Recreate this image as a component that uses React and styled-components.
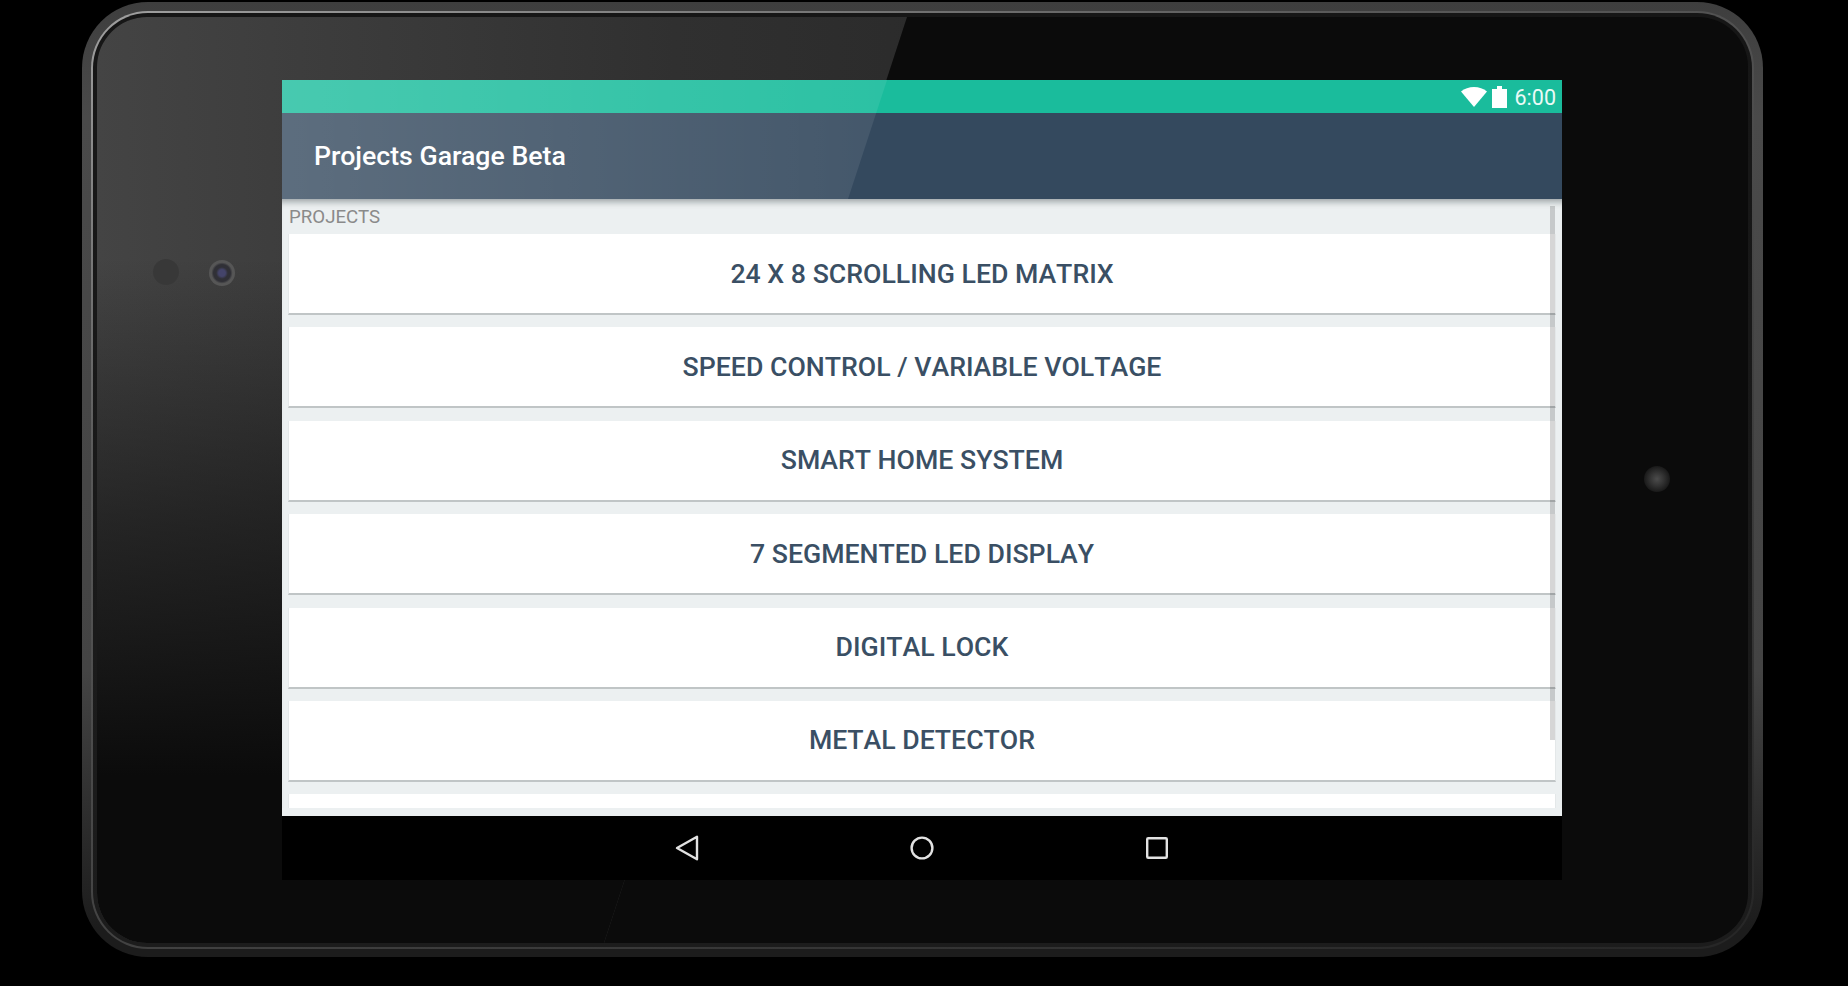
import React from "react";
import styled, { createGlobalStyle } from "styled-components";

const PROJECTS = [
  "24 X 8 SCROLLING LED MATRIX",
  "SPEED CONTROL / VARIABLE VOLTAGE",
  "SMART HOME SYSTEM",
  "7 SEGMENTED LED DISPLAY",
  "DIGITAL LOCK",
  "METAL DETECTOR",
  "",
];

const App = () => {
  return (
    <Page>
      <GlobalStyle />
      <Shell>
        <Rim>
          <Groove>
            <Bezel>
              <Glare />
              <FrontCamera />
              <CameraLens />
              <Sensor />
              <Screen>
                <TopBars>
                  <StatusBar>
                    <svg width="26" height="20" viewBox="0 0 26 20">
                      <path d="M0 4.5C3.5 1.6 8 0 13 0s9.5 1.6 13 4.5L13 20z" fill="#fff" />
                    </svg>
                    <svg width="15" height="22" viewBox="0 0 15 22">
                      <path d="M0 3h5V0h5v3h5v19H0z" fill="#fff" />
                    </svg>
                    <Clock>6:00</Clock>
                  </StatusBar>
                  <AppBar>Projects Garage Beta</AppBar>
                </TopBars>
                <Content>
                  <SectionLabel>PROJECTS</SectionLabel>
                  <ScrollThumb />
                  <CardList>
                    {PROJECTS.map((name, i) => (
                      <Card key={i}>{name}</Card>
                    ))}
                  </CardList>
                </Content>
                <NavBar>
                  <NavButton>
                    <svg width="24" height="26" viewBox="0 0 24 26">
                      <path d="M22 1.8v22.4L2 13z" fill="none" stroke="#e2e2e2" strokeWidth="2.4" strokeLinejoin="round" />
                    </svg>
                  </NavButton>
                  <NavButton>
                    <svg width="24" height="24" viewBox="0 0 24 24">
                      <circle cx="12" cy="12" r="10.4" fill="none" stroke="#e2e2e2" strokeWidth="2.4" />
                    </svg>
                  </NavButton>
                  <NavButton>
                    <svg width="22" height="22" viewBox="0 0 22 22">
                      <rect x="1.2" y="1.2" width="19.6" height="19.6" rx="1" fill="none" stroke="#e2e2e2" strokeWidth="2.4" />
                    </svg>
                  </NavButton>
                </NavBar>
              </Screen>
            </Bezel>
          </Groove>
        </Rim>
      </Shell>
    </Page>
  );
};

export default App;

const GlobalStyle = createGlobalStyle`
  html, body {
    margin: 0;
    background: #000;
  }
`;

const Page = styled.div`
  width: 1848px;
  height: 986px;
  padding: 2px 0 0 82px;
  box-sizing: border-box;
  background: #000;
  overflow: hidden;
  font-family: "Roboto", sans-serif;
`;

// Device frame: three nested rings round the black glass
const Shell = styled.div`
  width: 1681px;
  height: 955px;
  box-sizing: border-box;
  padding: 9px 9px 8px 9px;
  border-radius: 66px;
  background: linear-gradient(180deg, #3e3e3e 0%, #4a4a4a 12%, #444 70%, #1c1c1c 97%);
`;

const Rim = styled.div`
  height: 100%;
  box-sizing: border-box;
  padding: 2px;
  border-radius: 57px;
  background: linear-gradient(160deg, #a0a0a0 0%, #585858 30%, #262626 100%);
`;

const Groove = styled.div`
  height: 100%;
  box-sizing: border-box;
  padding: 4px;
  border-radius: 55px;
  background: linear-gradient(180deg, #161616 0%, #1c1c1c 100%);
`;

const Bezel = styled.div`
  position: relative;
  height: 100%;
  box-sizing: border-box;
  padding: 63px 0 0 185px;
  border-radius: 50px;
  overflow: hidden;
  background: #0b0b0b;
`;

const Glare = styled.div`
  position: absolute;
  inset: 0;
  clip-path: polygon(0 0, 810px 0, 507px 100%, 0 100%);
  background:
    linear-gradient(180deg, rgba(11, 11, 11, 0) 0%, rgba(11, 11, 11, 0) 26%, rgba(11, 11, 11, 0.55) 55%, #0b0b0b 82%),
    linear-gradient(90deg, #444 0%, #303030 35%, #1c1c1c 100%);
`;

const FrontCamera = styled.div`
  position: absolute;
  left: 56px;
  top: 242px;
  width: 26px;
  height: 26px;
  border-radius: 50%;
  background: radial-gradient(circle, #383838 0 70%, rgba(56, 56, 56, 0) 100%);
`;

const CameraLens = styled.div`
  position: absolute;
  left: 112px;
  top: 243px;
  width: 26px;
  height: 26px;
  border-radius: 50%;
  background: radial-gradient(circle, #44446a 0 18%, #303036 32% 46%, #565656 58% 82%, rgba(70, 70, 70, 0) 100%);
`;

const Sensor = styled.div`
  position: absolute;
  left: 1547px;
  top: 449px;
  width: 26px;
  height: 26px;
  border-radius: 50%;
  background: radial-gradient(circle, #4c4c4c 0%, #343434 35%, rgba(16, 16, 16, 0) 90%);
`;

const Screen = styled.div`
  position: relative;
  width: 1280px;
  height: 800px;
  display: flex;
  flex-direction: column;
  background: #ecf0f1;
`;

const TopBars = styled.div`
  position: relative;
  flex: none;

  &::after {
    content: "";
    position: absolute;
    inset: 0;
    clip-path: polygon(0 0, 605px 0, 566px 100%, 0 100%);
    background: linear-gradient(90deg, rgba(255, 255, 255, 0.2) 0%, rgba(255, 255, 255, 0.08) 100%);
    background-size: 605px 100%;
    background-repeat: no-repeat;
  }
`;

const StatusBar = styled.div`
  height: 33px;
  display: flex;
  align-items: center;
  justify-content: flex-end;
  gap: 5px;
  padding-right: 6px;
  background: #1abc9c;
`;

const Clock = styled.span`
  margin: 2px 0 0 3px;
  font-size: 21.5px;
  color: #eafaf6;
`;

const AppBar = styled.div`
  height: 86px;
  display: flex;
  align-items: center;
  padding-left: 32px;
  box-sizing: border-box;
  background: #34495e;
  color: #fff;
  font-size: 26.7px;
  font-weight: 500;
`;

const Content = styled.div`
  position: relative;
  flex: 1;
  min-height: 0;
  overflow: hidden;
  padding: 0 6px;
  box-shadow: inset 0 8px 6px -5px rgba(60, 70, 75, 0.45);

  &::after {
    content: "";
    position: absolute;
    left: 0;
    right: 0;
    bottom: 0;
    height: 8px;
    background: #ecf0f1;
  }
`;

const SectionLabel = styled.div`
  height: 35px;
  line-height: 32px;
  padding: 2px 0 0 1px;
  box-sizing: border-box;
  font-size: 18.7px;
  color: #8a8a8a;
`;

const ScrollThumb = styled.div`
  position: absolute;
  top: 7px;
  right: 7px;
  width: 5px;
  height: 534px;
  background: rgba(0, 0, 0, 0.16);
`;

const CardList = styled.div`
  display: flex;
  flex-direction: column;
  gap: 12.4px;
`;

const Card = styled.div`
  flex: none;
  height: 81px;
  box-sizing: border-box;
  display: flex;
  align-items: center;
  justify-content: center;
  background: #fff;
  border: 1px solid #e4e8e9;
  border-top: 0;
  border-bottom: 2px solid #c0c5c6;
  color: #3a4f64;
  font-size: 26.7px;
  font-weight: 500;
  font-kerning: none;
`;

const NavBar = styled.div`
  flex: none;
  height: 64px;
  display: flex;
  justify-content: center;
  background: #000;
`;

const NavButton = styled.div`
  width: 235px;
  display: flex;
  align-items: center;
  justify-content: center;
`;
